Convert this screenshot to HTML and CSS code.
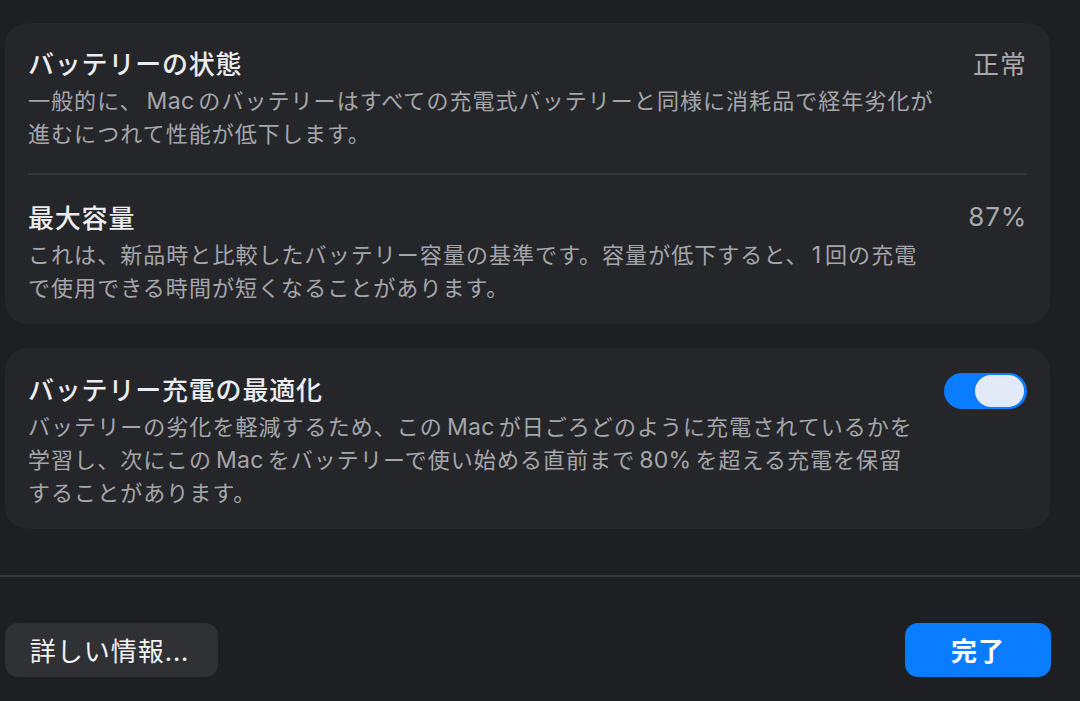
FILE: index.html
```html
<!DOCTYPE html>
<html lang="ja">
<head>
<meta charset="utf-8">
<link rel="stylesheet" href="styles.css">
</head>
<body>
<div class="window">
  <main class="content">
    <section class="card">
      <div class="row row-first">
        <div class="row-text">
          <div class="title">バッテリーの状態</div>
          <p class="desc">一般的に、<span class="lat">Mac</span>のバッテリーはすべての充電式バッテリーと同様に消耗品で経年劣化が<br>進むにつれて性能が低下します。</p>
        </div>
        <div class="value">正常</div>
      </div>
      <div class="divider"></div>
      <div class="row row-last">
        <div class="row-text">
          <div class="title">最大容量</div>
          <p class="desc">これは、新品時と比較したバッテリー容量の基準です。容量が低下すると、<span class="num">1</span>回の充電<br>で使用できる時間が短くなることがあります。</p>
        </div>
        <div class="value value-num">87%</div>
      </div>
    </section>

    <section class="card card-second">
      <div class="row row-last">
        <div class="row-text">
          <div class="title">バッテリー充電の最適化</div>
          <p class="desc">バッテリーの劣化を軽減するため、この<span class="lat">Mac</span>が日ごろどのように充電されているかを<br>学習し、次にこの<span class="lat">Mac</span>をバッテリーで使い始める直前まで<span class="lat">80%</span>を超える充電を保留<br>することがあります。</p>
        </div>
        <div class="toggle" role="switch" aria-checked="true"><span class="knob"></span></div>
      </div>
    </section>
  </main>

  <footer class="footer">
    <button class="btn btn-secondary">詳しい情報...</button>
    <button class="btn btn-primary">完了</button>
  </footer>
</div>
</body>
</html>
```

FILE: styles.css
```css
html, body {
  margin: 0;
  padding: 0;
  background: #1e1f22;
}

body {
  font-family: "Noto Sans CJK JP", "Noto Sans", sans-serif;
  color: #e6e6e8;
  width: 1080px;
  height: 701px;
  overflow: hidden;
}

.window {
  display: flex;
  flex-direction: column;
  height: 701px;
}

.content {
  padding: 23px 30px 0 5px;
  display: flex;
  flex-direction: column;
  gap: 24px;
}

.card {
  background: #25262a;
  border-radius: 22px;
  padding: 0 23px;
}

.row {
  display: flex;
  justify-content: space-between;
  align-items: flex-start;
  padding: 26px 0 22px;
}

.row-first {
  padding-top: 24px;
  padding-bottom: 24px;
}

.row-last {
  padding-bottom: 21px;
}

.row-text {
  display: flex;
  flex-direction: column;
}

.title {
  font-size: 26px;
  line-height: 32px;
  font-weight: 500;
  color: #ececee;
  letter-spacing: 0.8px;
}

.desc {
  margin: 4px 0 0;
  font-size: 22px;
  line-height: 33px;
  color: #a6a6aa;
  letter-spacing: 1.05px;
}

.lat {
  font-family: "Inter", "Noto Sans CJK JP", sans-serif;
  font-size: 23px;
  line-height: 0;
  letter-spacing: 0.3px;
  margin: 0 4px 0 4px;
}

.num {
  font-family: "Inter", "Noto Sans CJK JP", sans-serif;
  font-size: 23px;
  line-height: 0;
  margin: 0 3px;
}

.value {
  font-size: 26px;
  line-height: 32px;
  color: #a9a9ad;
  letter-spacing: 1px;
}

.value-num {
  font-family: "Inter", "Noto Sans CJK JP", sans-serif;
  font-size: 26px;
  letter-spacing: 0.8px;
}

.divider {
  height: 2px;
  background: #35363a;
}

.card-second .row {
  padding-top: 25px;
  padding-bottom: 21px;
}

.toggle {
  width: 83px;
  height: 36px;
  border-radius: 18px;
  background: #0a7cff;
  display: flex;
  align-items: center;
  justify-content: flex-end;
  padding-right: 3px;
  box-sizing: border-box;
}

.knob {
  width: 49px;
  height: 32px;
  border-radius: 16px;
  background: #e2eaf8;
}

.footer {
  margin-top: 46px;
  border-top: 2px solid #38393c;
  padding: 46px 29px 0 5px;
  display: flex;
  justify-content: space-between;
  align-items: flex-start;
}

.btn {
  font-family: "Noto Sans CJK JP", "Noto Sans", sans-serif;
  height: 54px;
  border: none;
  border-radius: 13px;
  font-size: 26px;
  line-height: 54px;
  padding: 0;
  color: #f2f2f4;
  letter-spacing: 1px;
}

.btn-secondary {
  width: 213px;
  background: #303134;
  font-weight: 400;
  padding-right: 4px;
}

.btn-primary {
  width: 146px;
  background: #0a7cff;
  color: #ffffff;
  font-weight: 700;
}
```
